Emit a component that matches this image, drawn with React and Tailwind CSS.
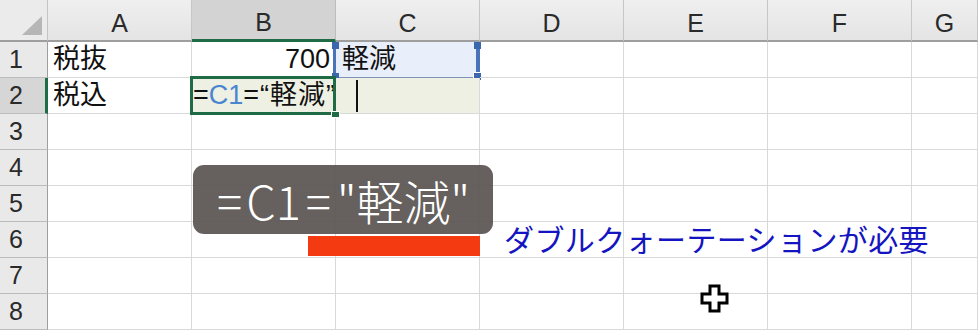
import React from "react";

const cols = ["A", "B", "C", "D", "E", "F", "G"];
const rows = [1, 2, 3, 4, 5, 6, 7, 8];
const FONT = { fontFamily: '"Liberation Sans", "Noto Sans CJK JP", sans-serif' };

function Handle({ className }) {
  return <div className={"absolute w-[7px] h-[7px] bg-[#3a67ad] " + className} />;
}

function Cell({ r, c }) {
  const base = "relative border-r border-b border-[#d9d9d9] flex items-center whitespace-nowrap text-[27px] text-[#111]";
  if (r === 1 && c === "A") return <div className={base + " pl-[5px]"}>税抜</div>;
  if (r === 2 && c === "A") return <div className={base + " pl-[5px]"}>税込</div>;
  if (r === 1 && c === "B") return <div className={base + " justify-end pr-[5px]"}>700</div>;
  if (r === 1 && c === "C")
    return (
      <div className={base + " bg-[#e8eefa] pl-[6px] border-l-[3px] border-l-[#4a74b8] border-r-[4px] border-r-[#4a74b8] border-b-[#7f93b5] -ml-[3px]"}>
        軽減
        <Handle className="-left-[4px] top-0 h-[6px]" />
        <Handle className="-right-[5px] top-0 h-[6px]" />
        <Handle className="-left-[4px] -bottom-[3px]" />
        <Handle className="-right-[6px] -bottom-[4px] w-[9px] h-[9px] border border-white" />
      </div>
    );
  if (r === 2 && c === "B")
    return (
      <div className={base + " bg-[#eef0e3] pl-[1px] z-10 overflow-visible"}>
        <span>=</span>
        <span className="text-[#4a86d0]">C1</span>
        <span className="tracking-[1px]">=“軽減”</span>
        <div className="absolute -left-[2px] -top-[2px] -right-[1px] -bottom-[2px] border-[3px] border-[#1f6b45] pointer-events-none" />
        <div className="absolute -right-[5px] -bottom-[5px] w-[9px] h-[7px] bg-[#1f6b45] border border-white" />
      </div>
    );
  if (r === 2 && c === "C")
    return (
      <div className={base + " bg-[#eef0e3] pl-[20px]"}>
        <span className="w-[2px] h-[32px] bg-[#111]" />
      </div>
    );
  return <div className={base}></div>;
}

export default function App() {
  return (
    <div className="relative w-[978px] h-[330px] overflow-hidden bg-white" style={FONT}>
      <div className="grid grid-cols-[48px_repeat(6,144px)_1fr] grid-rows-[42px_repeat(8,36px)] w-full h-full">
        {/* corner */}
        <div className="relative bg-[#ebebeb] border-r border-[#c4c4c4] border-b-2 border-b-[#9e9e9e]">
          <svg className="absolute left-[21px] top-[16px]" width="22" height="20" viewBox="0 0 22 20">
            <polygon points="21,0 21,19 1,19" fill="#b6b6b6" />
          </svg>
        </div>
        {cols.map((c) => (
          <div
            key={c}
            className={
              "flex items-center justify-center pt-[7px] text-[25px] text-[#2a2a2a] border-r " +
              (c === "B"
                ? "bg-[#d3d3d3] border-r-[#bdbdbd] border-b-[3px] border-b-[#1f6b45]"
                : "bg-gradient-to-b from-[#efefef] to-[#e4e4e4] border-r-[#c6c6c6] border-b-2 border-b-[#9e9e9e]")
            }
          >
            {c}
          </div>
        ))}
        {rows.map((r) => (
          <React.Fragment key={r}>
            <div
              className={
                "flex items-center pl-[9px] text-[25px] text-[#2a2a2a] border-b border-b-[#bcbcbc] " +
                (r === 2
                  ? "bg-[#d6d6d6] border-r-[3px] border-r-[#1f6b45]"
                  : "bg-[#e9e9e9] border-r border-r-[#9e9e9e]")
              }
            >
              {r}
            </div>
            {cols.map((c) => (
              <Cell key={c} r={r} c={c} />
            ))}
          </React.Fragment>
        ))}
      </div>

      {/* Callout overlay */}
      <div
        className="absolute left-[193px] top-[165px] w-[300px] h-[69px] rounded-[11px] bg-[#5e5955]/95 flex items-center pl-[24px] text-white text-[47px] font-light leading-none z-30"
        style={{ fontFamily: '"Noto Sans CJK JP", "Noto Sans", sans-serif' }}
      >
        <span className="mr-[4px]">=</span>
        <span>C1</span>
        <span className="ml-[5px] mr-[6px]">=</span>
        <span>"軽減"</span>
      </div>

      {/* Red bar */}
      <div className="absolute left-[308px] top-[236px] w-[172px] h-[20px] bg-[#f43a10] z-30" />

      {/* Blue note */}
      <div
        className="absolute left-[504px] top-[223px] text-[30px] tracking-[0.4px] leading-none text-[#1414c0] whitespace-nowrap z-30"
        style={{ fontFamily: '"Noto Sans CJK JP", sans-serif' }}
      >
        ダブルクォーテーションが必要
      </div>

      {/* Mouse cursor */}
      <svg className="absolute left-[699px] top-[283px] z-30" width="32" height="32" viewBox="0 0 32 32">
        <path
          d="M11 3 H20 V11 H28 V20 H20 V28 H11 V20 H3 V11 H11 Z"
          fill="#fff"
          stroke="#000"
          strokeWidth="3"
          strokeLinejoin="miter"
        />
      </svg>
    </div>
  );
}
